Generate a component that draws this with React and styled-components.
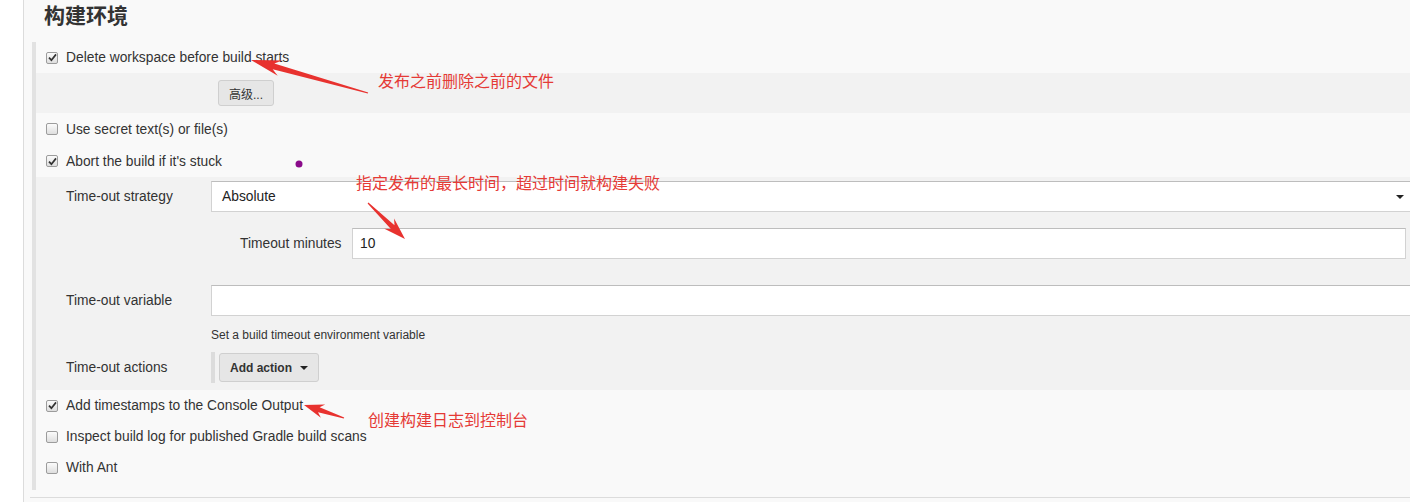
import React from "react";
import styled, { createGlobalStyle } from "styled-components";

const GlobalStyle = createGlobalStyle`
  body {
    margin: 0;
    background: #fff;
    font-family: "Liberation Sans", Arial, sans-serif;
    overflow: hidden;
  }
`;

const Page = styled.div`
  position: relative;
  width: 1410px;
  height: 502px;
  overflow: hidden;
`;

const Frame = styled.div`
  margin-left: 23px;
  width: 1400px;
  min-height: 502px;
  border-left: 1px solid #dcdcdc;
  background: #f9f9f9;
`;

const Heading = styled.h2`
  margin: 0;
  height: 42px;
  padding-left: 20px;
  line-height: 28px;
  font-size: 21px;
  font-weight: bold;
  color: #333;
  font-family: "Noto Sans CJK SC", "Liberation Sans", sans-serif;
`;

const Section = styled.div`
  margin-left: 8px;
  border-left: 4px solid #e2e2e2;
  padding-bottom: 7px;
`;

const CheckRow = styled.label`
  display: flex;
  align-items: center;
  gap: 8px;
  height: ${({ h }) => h || 31}px;
  padding-left: 10px;
  font-size: 13.8px;
  color: #333;
`;

const Box = styled.span`
  display: inline-flex;
  align-items: center;
  justify-content: center;
  box-sizing: border-box;
  width: 12px;
  height: 12px;
  border: 1px solid #9c9c9c;
  border-radius: 2px;
  background: linear-gradient(#fbfbfb, #dedede);
`;

const Checkbox = ({ checked }) => (
  <Box>
    {checked && (
      <svg width="9" height="9" viewBox="0 0 9 9">
        <path d="M1 4.6 L3.4 7.2 L8 1.4" fill="none" stroke="#333" strokeWidth="1.7" />
      </svg>
    )}
  </Box>
);

const Advanced = styled.div`
  background: #f2f2f2;
  padding: 7px 0 7px 182px;
`;

const Button = styled.button`
  box-sizing: border-box;
  height: ${({ h }) => h || 26}px;
  padding: 0 ${({ px }) => px || 10}px;
  border: 1px solid #cfcfcf;
  border-radius: 3px;
  background: #e6e6e6;
  color: #333;
  font-size: 12px;
  font-weight: ${({ bold }) => (bold ? "bold" : "normal")};
  font-family: "Liberation Sans", "Noto Sans CJK SC", sans-serif;
  display: inline-flex;
  align-items: center;
  gap: 8px;
`;

const Caret = styled.span`
  width: 0;
  height: 0;
  border-left: ${({ s }) => s || 4}px solid transparent;
  border-right: ${({ s }) => s || 4}px solid transparent;
  border-top: ${({ s }) => s || 4}px solid #222;
`;

const Nested = styled.div`
  background: #f2f2f2;
  padding: 4px 8px 7px 30px;
`;

const FieldRow = styled.div`
  display: grid;
  grid-template-columns: ${({ label }) => label || 145}px 1fr;
  align-items: center;
  margin-top: ${({ mt }) => mt || 0}px;
  padding-left: ${({ pl }) => pl || 0}px;
  padding-right: ${({ pr }) => pr || 0}px;
`;

const Label = styled.div`
  font-size: 13.8px;
  color: #333;
`;

const Field = styled.div`
  box-sizing: border-box;
  height: 31px;
  display: flex;
  align-items: center;
  justify-content: space-between;
  padding: 0 11px 0 ${({ pl }) => pl || 7}px;
  background: #fff;
  border: 1px solid #d2d2d2;
  border-top-color: #bdbdbd;
  font-size: 13.8px;
  color: #222;
`;

const Help = styled.div`
  margin-top: 12px;
  padding-left: 145px;
  font-size: 12px;
  line-height: 14px;
  color: #333;
`;

const Actions = styled.div`
  display: flex;
  align-items: center;
  height: 31px;
  border-left: 4px solid #dcdcdc;
  padding-left: 4px;
`;

const Divider = styled.div`
  margin: 7px 0 0 6px;
  border-top: 1px solid #dcdcdc;
`;

const Overlay = styled.svg`
  position: absolute;
  left: 0;
  top: 0;
  pointer-events: none;
`;

const Note = styled.span`
  position: absolute;
  left: ${({ x }) => x}px;
  top: ${({ y }) => y}px;
  font-family: "Noto Sans CJK SC", sans-serif;
  font-size: 16px;
  line-height: 20px;
  color: #e53a36;
  white-space: nowrap;
`;

const arrow = (x1, y1, x2, y2, head, hw, sw) => {
  const dx = x2 - x1;
  const dy = y2 - y1;
  const l = Math.hypot(dx, dy);
  const ux = dx / l;
  const uy = dy / l;
  const px = -uy;
  const py = ux;
  const bx = x2 - ux * head;
  const by = y2 - uy * head;
  const nx = x2 - ux * head * 0.78;
  const ny = y2 - uy * head * 0.78;
  const pts = [
    [x1 + px * 0.6, y1 + py * 0.6],
    [nx + px * sw, ny + py * sw],
    [bx + px * hw, by + py * hw],
    [x2, y2],
    [bx - px * hw, by - py * hw],
    [nx - px * sw, ny - py * sw],
    [x1 - px * 0.6, y1 - py * 0.6],
  ];
  return pts.map((p) => p.map((v) => v.toFixed(1)).join(",")).join(" ");
};

export default function App() {
  return (
    <Page>
      <GlobalStyle />
      <Frame>
        <Heading>构建环境</Heading>
        <Section>
          <CheckRow>
            <Checkbox checked />
            Delete workspace before build starts
          </CheckRow>
          <Advanced>
            <Button>高级...</Button>
          </Advanced>
          <CheckRow h={32}>
            <Checkbox />
            Use secret text(s) or file(s)
          </CheckRow>
          <CheckRow h={32}>
            <Checkbox checked />
            Abort the build if it's stuck
          </CheckRow>
          <Nested>
            <FieldRow>
              <Label>Time-out strategy</Label>
              <Field pl={10}>
                Absolute
                <Caret s={4} />
              </Field>
            </FieldRow>
            <FieldRow label={112} mt={16} pl={174} pr={10}>
              <Label>Timeout minutes</Label>
              <Field>10</Field>
            </FieldRow>
            <FieldRow mt={26}>
              <Label>Time-out variable</Label>
              <Field />
            </FieldRow>
            <Help>Set a build timeout environment variable</Help>
            <FieldRow mt={10}>
              <Label>Time-out actions</Label>
              <Actions>
                <Button h={29} px={10} bold>
                  Add action
                  <Caret s={4} />
                </Button>
              </Actions>
            </FieldRow>
          </Nested>
          <CheckRow>
            <Checkbox checked />
            Add timestamps to the Console Output
          </CheckRow>
          <CheckRow>
            <Checkbox />
            Inspect build log for published Gradle build scans
          </CheckRow>
          <CheckRow>
            <Checkbox />
            With Ant
          </CheckRow>
        </Section>
        <Divider />
      </Frame>

      <Overlay width="1410" height="502">
        <polygon points={arrow(368, 93, 251, 60, 30, 8, 3)} fill="#e8322f" />
        <polygon points={arrow(368, 203, 405, 239, 22, 7, 2.6)} fill="#e8322f" />
        <polygon points={arrow(344, 418, 304, 405, 20, 7, 2.6)} fill="#e8322f" />
        <circle cx="299" cy="164" r="3.5" fill="#8a0b8a" />
      </Overlay>
      <Note x={378} y={70}>发布之前删除之前的文件</Note>
      <Note x={356} y={172}>指定发布的最长时间，超过时间就构建失败</Note>
      <Note x={368} y={409}>创建构建日志到控制台</Note>
    </Page>
  );
}
